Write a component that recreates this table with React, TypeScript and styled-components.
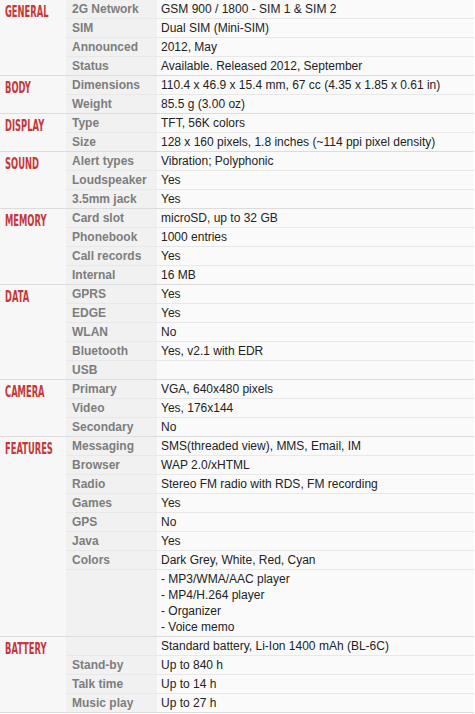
import React from 'react';
import styled, { createGlobalStyle } from 'styled-components';

const GlobalStyle = createGlobalStyle`
  html, body {
    margin: 0;
    padding: 0;
    background: #ffffff;
  }
`;

const SpecTable = styled.table`
  width: 474px;
  table-layout: fixed;
  border-collapse: collapse;
  border-spacing: 0;
  background: #fafafa;
  font-family: 'Liberation Sans', Arial, sans-serif;
  font-size: 12px;
  line-height: 16px;
`;

const Section = styled.tbody`
  & tr:last-child td {
    border-bottom-color: #dcdcdc;
  }
`;

const Category = styled.th`
  padding: 3px 0 0 5px;
  vertical-align: top;
  text-align: left;
  background: #f7f7f7;
  border-bottom: 1px solid #dcdcdc;
  color: #c4383a;
  font-family: 'DejaVu Sans', sans-serif;
  font-stretch: condensed;
  font-weight: bold;
  font-size: 15px;
  line-height: 18px;
  white-space: nowrap;
  overflow: visible;
`;

const CategoryText = styled.span`
  display: inline-block;
  transform: scaleX(0.62);
  transform-origin: left center;
`;

const Label = styled.td`
  padding: 1px 0 1px 6px;
  vertical-align: top;
  background: #f1f1f1;
  border-bottom: 1px solid #e8e8e8;
  color: #7d7d7d;
  font-weight: bold;
  white-space: nowrap;
  overflow: hidden;
`;

const Value = styled.td`
  padding: 1px 4px;
  vertical-align: top;
  border-bottom: 1px solid #e8e8e8;
  color: #222222;
  white-space: nowrap;
`;

type Spec = { label: string; value: string[] };
type Group = { name: string; specs: Spec[] };

const groups: Group[] = [
  {
    name: 'GENERAL',
    specs: [
      { label: '2G Network', value: ['GSM 900 / 1800 - SIM 1 & SIM 2'] },
      { label: 'SIM', value: ['Dual SIM (Mini-SIM)'] },
      { label: 'Announced', value: ['2012, May'] },
      { label: 'Status', value: ['Available. Released 2012, September'] },
    ],
  },
  {
    name: 'BODY',
    specs: [
      { label: 'Dimensions', value: ['110.4 x 46.9 x 15.4 mm, 67 cc (4.35 x 1.85 x 0.61 in)'] },
      { label: 'Weight', value: ['85.5 g (3.00 oz)'] },
    ],
  },
  {
    name: 'DISPLAY',
    specs: [
      { label: 'Type', value: ['TFT, 56K colors'] },
      { label: 'Size', value: ['128 x 160 pixels, 1.8 inches (~114 ppi pixel density)'] },
    ],
  },
  {
    name: 'SOUND',
    specs: [
      { label: 'Alert types', value: ['Vibration; Polyphonic'] },
      { label: 'Loudspeaker', value: ['Yes'] },
      { label: '3.5mm jack', value: ['Yes'] },
    ],
  },
  {
    name: 'MEMORY',
    specs: [
      { label: 'Card slot', value: ['microSD, up to 32 GB'] },
      { label: 'Phonebook', value: ['1000 entries'] },
      { label: 'Call records', value: ['Yes'] },
      { label: 'Internal', value: ['16 MB'] },
    ],
  },
  {
    name: 'DATA',
    specs: [
      { label: 'GPRS', value: ['Yes'] },
      { label: 'EDGE', value: ['Yes'] },
      { label: 'WLAN', value: ['No'] },
      { label: 'Bluetooth', value: ['Yes, v2.1 with EDR'] },
      { label: 'USB', value: [''] },
    ],
  },
  {
    name: 'CAMERA',
    specs: [
      { label: 'Primary', value: ['VGA, 640x480 pixels'] },
      { label: 'Video', value: ['Yes, 176x144'] },
      { label: 'Secondary', value: ['No'] },
    ],
  },
  {
    name: 'FEATURES',
    specs: [
      { label: 'Messaging', value: ['SMS(threaded view), MMS, Email, IM'] },
      { label: 'Browser', value: ['WAP 2.0/xHTML'] },
      { label: 'Radio', value: ['Stereo FM radio with RDS, FM recording'] },
      { label: 'Games', value: ['Yes'] },
      { label: 'GPS', value: ['No'] },
      { label: 'Java', value: ['Yes'] },
      { label: 'Colors', value: ['Dark Grey, White, Red, Cyan'] },
      {
        label: '',
        value: ['- MP3/WMA/AAC player', '- MP4/H.264 player', '- Organizer', '- Voice memo'],
      },
    ],
  },
  {
    name: 'BATTERY',
    specs: [
      { label: '', value: ['Standard battery, Li-Ion 1400 mAh (BL-6C)'] },
      { label: 'Stand-by', value: ['Up to 840 h'] },
      { label: 'Talk time', value: ['Up to 14 h'] },
      { label: 'Music play', value: ['Up to 27 h'] },
    ],
  },
];

const App = () => (
  <>
    <GlobalStyle />
    <SpecTable>
      <colgroup>
        <col style={{ width: 66 }} />
        <col style={{ width: 91 }} />
        <col />
      </colgroup>
      {groups.map(group => (
        <Section key={group.name}>
          {group.specs.map((spec, i) => (
            <tr key={i}>
              {i === 0 && (
                <Category rowSpan={group.specs.length}>
                  <CategoryText>{group.name}</CategoryText>
                </Category>
              )}
              <Label>{spec.label || '\u00a0'}</Label>
              <Value>
                {spec.value.map((line, j) => (
                  <React.Fragment key={j}>
                    {j > 0 && <br />}
                    {line || '\u00a0'}
                  </React.Fragment>
                ))}
              </Value>
            </tr>
          ))}
        </Section>
      ))}
    </SpecTable>
  </>
);

export default App;
